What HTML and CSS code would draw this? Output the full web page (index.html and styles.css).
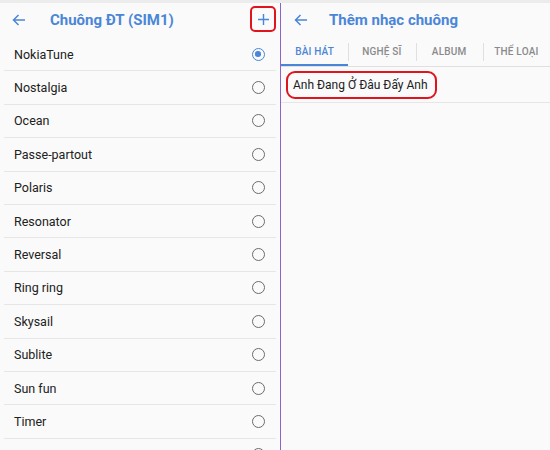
FILE: index.html
```html
<!DOCTYPE html>
<html>
<head>
<meta charset="utf-8">
<link rel="stylesheet" href="styles.css">
</head>
<body>
<div class="topstrip"></div>
<div class="screen">
  <section class="left">
    <header class="bar">
      <svg class="back" width="14" height="12" viewBox="0 0 14 12"><path d="M13 6H1.5M6.5 1L1.5 6l5 5" fill="none" stroke="#4a86d8" stroke-width="1.5"/></svg>
      <h1 class="title">Chuông ĐT (SIM1)</h1>
      <div class="addbox">
        <svg width="13" height="13" viewBox="0 0 13 13"><path d="M6.5 1v11M1 6.5h11" fill="none" stroke="#4a86d8" stroke-width="1.4"/></svg>
      </div>
    </header>
    <ul class="list">
      <li class="row"><span>NokiaTune</span><span class="radio on"></span></li>
      <li class="row"><span>Nostalgia</span><span class="radio"></span></li>
      <li class="row"><span>Ocean</span><span class="radio"></span></li>
      <li class="row"><span>Passe-partout</span><span class="radio"></span></li>
      <li class="row"><span>Polaris</span><span class="radio"></span></li>
      <li class="row"><span>Resonator</span><span class="radio"></span></li>
      <li class="row"><span>Reversal</span><span class="radio"></span></li>
      <li class="row"><span>Ring ring</span><span class="radio"></span></li>
      <li class="row"><span>Skysail</span><span class="radio"></span></li>
      <li class="row"><span>Sublite</span><span class="radio"></span></li>
      <li class="row"><span>Sun fun</span><span class="radio"></span></li>
      <li class="row"><span>Timer</span><span class="radio"></span></li>
      <li class="row"><span>&nbsp;</span><span class="radio"></span></li>
    </ul>
  </section>
  <section class="right">
    <header class="bar rbar">
      <svg class="back" width="14" height="12" viewBox="0 0 14 12"><path d="M13 6H1.5M6.5 1L1.5 6l5 5" fill="none" stroke="#4a86d8" stroke-width="1.5"/></svg>
      <h1 class="title rtitle">Thêm nhạc chuông</h1>
    </header>
    <nav class="tabs">
      <div class="tab active">BÀI HÁT</div>
      <div class="tab">NGHỆ SĨ</div>
      <div class="tab">ALBUM</div>
      <div class="tab">THỂ LOẠI</div>
    </nav>
    <div class="song"><span class="songbox">Anh Đang Ở Đâu Đấy Anh</span></div>
  </section>
</div>
</body>
</html>
```

FILE: styles.css
```css
* { box-sizing: border-box; }
html, body { margin: 0; padding: 0; }
body {
  width: 550px;
  height: 450px;
  overflow: hidden;
  background: #fafafa;
  font-family: Roboto, "Noto Sans", sans-serif;
  color: #212121;
}
.topstrip { height: 3px; background: #ececec; }
.screen { display: flex; height: 447px; }
.left {
  width: 281px;
  border-right: 1px solid #8d62cf;
  flex: none;
}
.right { flex: 1; }
.bar {
  height: 34px;
  display: flex;
  align-items: center;
}
.back { margin-left: 12px; flex: none; }
.title {
  margin: 0 0 0 24px;
  font-size: 15px;
  font-weight: 700;
  color: #4a86d8;
  flex: 1;
}
.addbox {
  width: 26px;
  height: 26px;
  border: 2px solid #e0141c;
  border-radius: 5px;
  display: flex;
  align-items: center;
  justify-content: center;
  margin-right: 4px;
  margin-bottom: 2px;
}
.list { list-style: none; margin: 0; padding: 1px 4px 0 4px; }
.row {
  height: 33.4px;
  border-bottom: 1px solid #e6e6e6;
  display: flex;
  align-items: center;
  justify-content: space-between;
  padding: 0 11px 0 10px;
  font-size: 12.5px;
}
.radio {
  width: 13px;
  height: 13px;
  border: 1.4px solid #6b6b6b;
  border-radius: 50%;
  position: relative;
}
.radio.on { border-color: #4a86d8; }
.radio.on::after {
  content: "";
  position: absolute;
  left: 2.3px; top: 2.3px;
  width: 5.6px; height: 5.6px;
  border-radius: 50%;
  background: #4a86d8;
}
.rbar .back { margin-left: 13px; }
.rtitle { margin-left: 21px; }
.tabs {
  display: flex;
  height: 30px;
  border-bottom: 1px solid #e0e0e0;
  align-items: stretch;
}
.tab {
  flex: 1;
  display: flex;
  align-items: center;
  justify-content: center;
  font-size: 10px;
  font-weight: 500;
  letter-spacing: 0.2px;
  color: #8a8a8a;
  position: relative;
  border-bottom: 2px solid transparent;
  padding-top: 2px;
}
.tab + .tab::before {
  content: "";
  position: absolute;
  left: 0; top: 6px;
  width: 1px; height: 18px;
  background: #e0e0e0;
}
.tab.active { color: #4a86d8; border-bottom-color: #4a86d8; }
.song {
  height: 36px;
  border-bottom: 1px solid #e6e6e6;
  display: flex;
  align-items: center;
  padding-left: 5px;
}
.songbox {
  border: 2px solid #e0141c;
  border-radius: 9px;
  padding: 5px 7px 5px 5px;
  font-size: 12px;
}
```
